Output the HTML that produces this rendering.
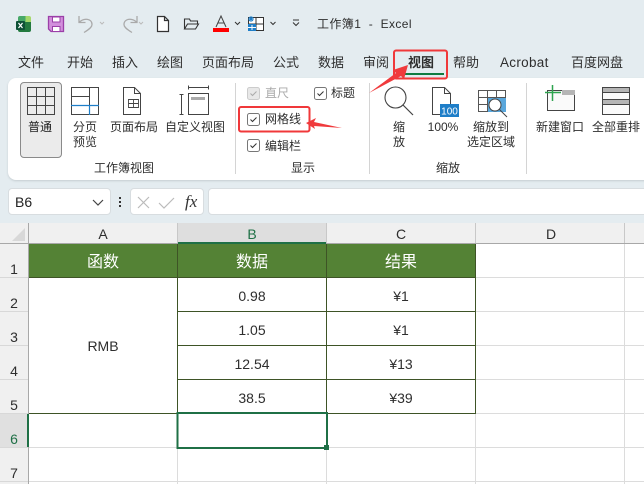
<!DOCTYPE html>
<html><head><meta charset="utf-8">
<style>
html,body{margin:0;padding:0}
body{width:644px;height:484px;overflow:hidden;background:#e4ecf0;position:relative;font-family:"Liberation Sans","Noto Sans CJK SC",sans-serif;color:#2e2e2e}
.t{position:absolute;white-space:nowrap;line-height:16px}
.c{transform:translateX(-50%);text-align:center}
.r{position:absolute}
svg{position:absolute;left:0;top:0}
</style></head><body>
<!-- tabs -->
<div class="t" style="left:18px;top:55px;font-size:13px">文件</div>
<div class="t" style="left:67px;top:55px;font-size:13px">开始</div>
<div class="t" style="left:112px;top:55px;font-size:13px">插入</div>
<div class="t" style="left:157px;top:55px;font-size:13px">绘图</div>
<div class="t" style="left:202px;top:55px;font-size:13px">页面布局</div>
<div class="t" style="left:273px;top:55px;font-size:13px">公式</div>
<div class="t" style="left:318px;top:55px;font-size:13px">数据</div>
<div class="t" style="left:363px;top:55px;font-size:13px">审阅</div>
<div class="t" style="left:408px;top:55px;font-size:13px;font-weight:bold">视图</div>
<div class="t" style="left:453px;top:55px;font-size:13px">帮助</div>
<div class="t" style="left:500px;top:55px;font-size:13.500px;letter-spacing:.3px">Acrobat</div>
<div class="t" style="left:571px;top:55px;font-size:13px">百度网盘</div>
<div class="t" style="left:317px;top:16px;font-size:12px;letter-spacing:.4px">工作簿1&nbsp; -&nbsp; Excel</div>
<!-- ribbon -->
<div class="r" style="left:8px;top:78px;width:660px;height:102px;background:#fff;border-radius:8px;box-shadow:0 1px 2px #c4ccd0"></div>
<div class="r" style="left:20px;top:82px;width:40px;height:74px;background:#ebebeb;border:1px solid #8a8a8a;border-radius:4px"></div>
<div class="r" style="left:235px;top:83px;width:1px;height:91px;background:#d4d4d4"></div>
<div class="r" style="left:369px;top:83px;width:1px;height:91px;background:#d4d4d4"></div>
<div class="r" style="left:526px;top:83px;width:1px;height:91px;background:#d4d4d4"></div>
<div class="t c" style="left:40px;top:119px;font-size:12px;color:#222">普通</div>
<div class="t c" style="left:85px;top:120px;font-size:12px;line-height:15px">分页<br>预览</div>
<div class="t c" style="left:134px;top:119px;font-size:12px">页面布局</div>
<div class="t c" style="left:195px;top:119px;font-size:12px">自定义视图</div>
<div class="t c" style="left:124px;top:160px;font-size:12px">工作簿视图</div>
<div class="t" style="left:265px;top:85px;font-size:12px;color:#aaa">直尺</div>
<div class="t" style="left:331px;top:85px;font-size:12px">标题</div>
<div class="t" style="left:265px;top:111px;font-size:12px">网格线</div>
<div class="t" style="left:265px;top:138px;font-size:12px">编辑栏</div>
<div class="t c" style="left:303px;top:160px;font-size:12px">显示</div>
<div class="t c" style="left:399px;top:120px;font-size:12px;line-height:15px">缩<br>放</div>
<div class="t c" style="left:443px;top:119px;font-size:12px">100%</div>
<div class="t c" style="left:491px;top:120px;font-size:12px;line-height:15px">缩放到<br>选定区域</div>
<div class="t c" style="left:448px;top:160px;font-size:12px">缩放</div>
<div class="t c" style="left:560px;top:119px;font-size:12px">新建窗口</div>
<div class="t c" style="left:616px;top:119px;font-size:12px">全部重排</div>
<!-- formula bar -->
<div class="r" style="left:8px;top:188px;width:101px;height:25px;background:#fff;border:1px solid #d8dde0;border-radius:4px"></div>
<div class="t" style="left:15px;top:194px;font-size:14px;color:#222">B6</div>
<div class="r" style="left:130px;top:188px;width:72px;height:25px;background:#fff;border:1px solid #d8dde0;border-radius:4px"></div>
<div class="r" style="left:208px;top:188px;width:440px;height:25px;background:#fff;border:1px solid #d8dde0;border-radius:4px"></div>
<div class="t" style="left:185px;top:194px;font:italic 17px/16px 'Liberation Serif',serif;color:#333">fx</div>
<!-- grid -->
<div class="r" style="left:0;top:223px;width:644px;height:261px;background:#fff"></div>
<div class="r" style="left:0;top:223px;width:28px;height:261px;background:#f0f0f0"></div>
<div class="r" style="left:0;top:223px;width:644px;height:20px;background:#f0f0f0"></div>
<div class="r" style="left:178px;top:223px;width:148px;height:20px;background:#dedede"></div>
<div class="r" style="left:0;top:414px;width:28px;height:33px;background:#e0e0e0"></div>
<div class="r" style="left:29px;top:244px;width:446px;height:33px;background:#548235"></div>
<svg width="644" height="484" viewBox="0 0 644 484" fill="none">
 <!-- QAT -->
 <path d="M20 16h5.500v6H18v-4a2 2 0 0 1 2-2z" fill="#47a868"/><path d="M25.500 16H29a2 2 0 0 1 2 2v4h-5.500z" fill="#a5d86a"/>
 <path d="M18 22h13v8a2 2 0 0 1-2 2H20a2 2 0 0 1-2-2z" fill="#237a3f"/>
 <rect x="16" y="21" width="9" height="9" rx="1" fill="#0e5136"/><path d="M18.500 23l4 5M22.500 23l-4 5" stroke="#fff" stroke-width="1.200"/>
 <path d="M48.500 16.500h15v15H51l-2.500-2.500z" fill="#d28fdc" stroke="#9b3fa8" stroke-width="1.300"/><rect x="52.500" y="17" width="7.500" height="5" fill="#fff" stroke="#9b3fa8"/><rect x="52.500" y="26.500" width="7.500" height="5" fill="#fff" stroke="#9b3fa8"/>
 <path d="M79 16v6.500h6.500M79 22.500c5-5 13-4 13 2 0 2-1.500 4-8 8" stroke="#aaa" stroke-width="1.300"/>
 <path d="M100 22l2 2 2-2" stroke="#bbb"/>
 <path d="M137 16v6.500h-6.500M137 22.500c-5-5-13-4-13 2 0 2 1.500 4 8 8" stroke="#aaa" stroke-width="1.300"/>
 <path d="M139 22l2 2 2-2" stroke="#bbb"/>
 <path d="M157.500 16.500h7l4 4v11h-11zM164.500 16.500v4h4" stroke="#333" stroke-width="1.200" fill="#fff"/>
 <path d="M184.500 29v-10h5l1 2h7v3M184.500 29l3-5h11l-3 5z" stroke="#333" stroke-width="1.100"/>
 <path d="M216 27l5-11 5 11M218 23h6" stroke="#444" stroke-width="1"/><rect x="213" y="28" width="16" height="4" fill="#f00"/>
 <path d="M235 22l2.500 2.500 2.500-2.500" stroke="#333"/>
 <rect x="248.500" y="17.500" width="15" height="13" stroke="#333" fill="#fff"/><path d="M256 17v14M248 24h16" stroke="#333"/>
 <rect x="248" y="24" width="8" height="7" fill="#1e7ec8"/><path d="M252 25v5M248 27.500h8" stroke="#fff"/><path d="M251 16v6M248 19h6M249 17l4 4M253 17l-4 4" stroke="#1e7ec8"/>
 <path d="M270.500 22l2.500 2.500 2.500-2.500" stroke="#333"/>
 <path d="M293 20h6M293 22.500l3 3 3-3" stroke="#333"/>
 <!-- tab underline, red box -->
 <rect x="404" y="73" width="40" height="2" fill="#107c41"/>
 <rect x="394" y="50.500" width="53" height="28" rx="2" stroke="#f0383a" stroke-width="2"/>
 <path d="M369 93L396 73l-3-3 15-5-4 14-3-3z" fill="#f03a3c"/>
 <!-- ribbon icons -->
 <g stroke="#444" stroke-width="1">
  <path d="M27.500 87.500h27v27h-27zM36.500 87.500v27M45.500 87.500v27M27.500 96.500h27M27.500 105.500h27"/>
  <path d="M71.500 87.500h27v27h-27zM89.500 87.500v18M71.500 96.500h18"/>
  <path d="M123.500 87.500h11l6 6v21h-17zM134.500 87.500v6h6"/><path d="M128.500 99.500h10v8h-10zM133.500 99.500v8M128.500 103.500h10" stroke-width=".9"/>
  <path d="M188.500 87.500h20M188.500 85.500v4M208.500 85.500v4M181.500 94.500v20M179.500 94.500h4M179.500 114.500h4"/>
  <path d="M188.500 93.500h20v21h-20z"/>
 </g>
 <path d="M71 105.500h28M89.500 106v9" stroke="#1e7ec8" stroke-width="1.200"/>
 <rect x="191" y="97" width="14" height="3" fill="#aaa"/>
 <!-- checkboxes -->
 <g stroke-width="1">
  <rect x="247.500" y="87.500" width="12" height="12" rx="2" fill="#e8e8e8" stroke="#ccc"/><path d="M250.500 93.500l2 2 4-4" stroke="#aaa"/>
  <rect x="314.500" y="87.500" width="12" height="12" rx="2" fill="#fff" stroke="#777"/><path d="M317.500 93.500l2 2 4-4" stroke="#333"/>
  <rect x="247.500" y="113.500" width="12" height="12" rx="2" fill="#fff" stroke="#777"/><path d="M250.500 119.500l2 2 4-4" stroke="#333"/>
  <rect x="247.500" y="139.500" width="12" height="12" rx="2" fill="#fff" stroke="#777"/><path d="M250.500 145.500l2 2 4-4" stroke="#333"/>
 </g>
 <rect x="239" y="107" width="70.500" height="24.500" rx="2" stroke="#f0383a" stroke-width="2"/>
 <path d="M306 123l10-5-2 4 28 6-28-2 1 3z" fill="#f03a3c"/>
 <!-- zoom icons -->
 <circle cx="395.500" cy="97.500" r="10.500" stroke="#444" stroke-width="1.100"/><path d="M403 105l10 10" stroke="#444" stroke-width="1.200"/>
 <path d="M432.500 87.500h12l6 6v21h-18zM444.500 87.500v6h6" stroke="#444" fill="#fff"/>
 <rect x="440" y="104" width="19" height="13" fill="#1e7ec8"/>
 <text x="449.500" y="114.500" font-family="Liberation Sans" font-size="10" fill="#fff" text-anchor="middle">100</text>
 <path d="M478.500 90.500h27v21h-27zM487.500 90.500v21M496.500 90.500v7M478.500 97.500h27M478.500 104.500h9" stroke="#555"/>
 <rect x="488" y="98" width="18" height="14" fill="#5aa7dc"/>
 <circle cx="495" cy="105" r="6" fill="#fff" stroke="#444"/><path d="M499 109l8 8" stroke="#444"/>
 <!-- window icons -->
 <path d="M547.500 90.500h27v20h-27z" stroke="#444" fill="#fafafa"/><rect x="562" y="90" width="13" height="5" fill="#b5b5b5"/>
 <path d="M539 90h8" stroke="#fff" stroke-width="0"/>
 <path d="M552.500 85v16M545 92.500h16" stroke="#2ea44f" stroke-width="1.500"/>
 <path d="M602.500 87.500h27v27h-27z" stroke="#444" fill="#fafafa"/><rect x="603" y="88" width="26" height="4" fill="#b5b5b5"/><rect x="603" y="100" width="26" height="4" fill="#b5b5b5"/><path d="M602 92.500h27M602 99.500h27M602 104.500h27" stroke="#444"/>
 <!-- formula bar icons -->
 <path d="M93 200l5 5 5-5" stroke="#444" stroke-width="1.200"/>
 <path d="M120 197v2M120 201v2M120 205v2" stroke="#333" stroke-width="2"/>
 <path d="M138 197l11 11M149 197l-11 11" stroke="#bbb" stroke-width="1.200"/>
 <path d="M159 203l5 5 10-10" stroke="#bbb" stroke-width="1.200"/>
 <!-- corner -->
 <path d="M25 228v13H12z" fill="#d8d8d8"/>
 <!-- headers lines -->
 <path d="M0 243.500h644" stroke="#a8a8a8"/><path d="M28.500 223v261" stroke="#a8a8a8"/>
 <path d="M177.500 223v20M326.500 223v20M475.500 223v20M624.500 223v20" stroke="#c8c8c8"/>
 <path d="M0 277.500h28M0 311.500h28M0 345.500h28M0 379.500h28M0 413.500h28M0 447.500h28M0 481.500h28" stroke="#d8d8d8"/>
 <path d="M178 243h148" stroke="#1f7046" stroke-width="2"/>
 <!-- cell grid light -->
 <path d="M476 277.500h168M476 311.500h168M476 345.500h168M476 379.500h168M476 413.500h168M29 447.500h615M29 481.500h615M475.500 414v70M326.500 414v70M177.500 414v70M624.500 244v240" stroke="#dcdcdc"/>
 <!-- table borders -->
 <path d="M29 277.500h447M178 311.500h298M178 345.500h298M178 379.500h298M29 413.500h447M177.500 244v170M326.500 244v170M475.500 244v170" stroke="#3e5426"/>
 <!-- selection -->
 <rect x="177.500" y="413" width="149.500" height="35" stroke="#1f7046" stroke-width="2"/>
 <rect x="324" y="445" width="5" height="5" fill="#1f7046"/>
 <path d="M28 414v33" stroke="#1f7046" stroke-width="2"/>
</svg>
<!-- col heads -->
<div class="t c" style="left:103px;top:226px;font-size:14px">A</div>
<div class="t c" style="left:252px;top:226px;font-size:14px;color:#1f7046">B</div>
<div class="t c" style="left:401px;top:226px;font-size:14px">C</div>
<div class="t c" style="left:551px;top:226px;font-size:14px">D</div>
<!-- row heads -->
<div class="t c" style="left:14px;top:261px;font-size:14px">1</div>
<div class="t c" style="left:14px;top:295px;font-size:14px">2</div>
<div class="t c" style="left:14px;top:329px;font-size:14px">3</div>
<div class="t c" style="left:14px;top:363px;font-size:14px">4</div>
<div class="t c" style="left:14px;top:397px;font-size:14px">5</div>
<div class="t c" style="left:14px;top:431px;font-size:14px;color:#1f7046">6</div>
<div class="t c" style="left:14px;top:465px;font-size:14px">7</div>
<!-- cells -->
<div class="t c" style="left:103px;top:255px;font-size:16px;color:#fff">函数</div>
<div class="t c" style="left:252px;top:255px;font-size:16px;color:#fff">数据</div>
<div class="t c" style="left:401px;top:255px;font-size:16px;color:#fff">结果</div>
<div class="t c" style="left:103px;top:338px;font-size:14px">RMB</div>
<div class="t c" style="left:252px;top:288px;font-size:14px">0.98</div>
<div class="t c" style="left:252px;top:322px;font-size:14px">1.05</div>
<div class="t c" style="left:252px;top:356px;font-size:14px">12.54</div>
<div class="t c" style="left:252px;top:390px;font-size:14px">38.5</div>
<div class="t c" style="left:401px;top:288px;font-size:14px">¥1</div>
<div class="t c" style="left:401px;top:322px;font-size:14px">¥1</div>
<div class="t c" style="left:401px;top:356px;font-size:14px">¥13</div>
<div class="t c" style="left:401px;top:390px;font-size:14px">¥39</div>
</body></html>
